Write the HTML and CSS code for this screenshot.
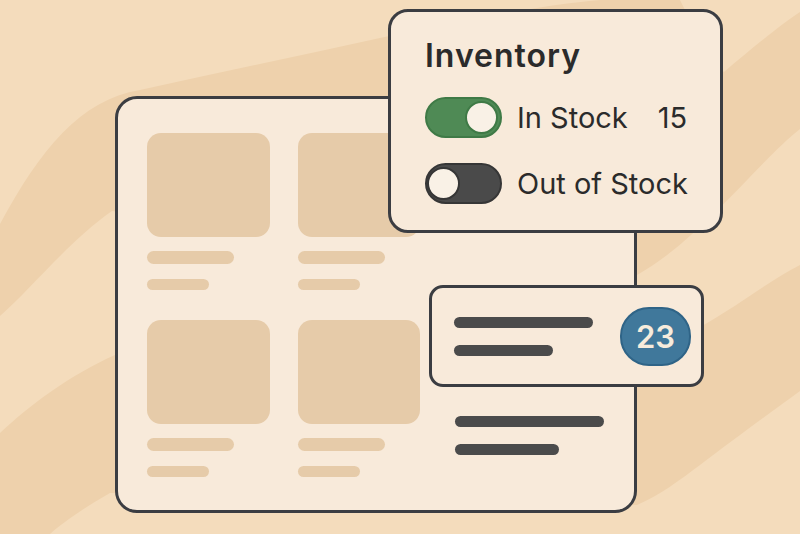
FILE: index.html
```html
<!DOCTYPE html>
<html lang="en">
<head>
    <meta charset="UTF-8">
    <meta name="viewport" content="width=device-width, initial-scale=1.0">
    <title>Inventory</title>
    <link rel="stylesheet" href="styles.css">
</head>
<body>

    <div class="scene">
        <!-- Wavy backdrop -->
        <svg class="backdrop" width="800" height="534" viewBox="0 0 800 534" aria-hidden="true">
            <rect width="800" height="534" fill="#f4dcbc"/>
            <path d="M0 224 C40 150 80 100 140 90 C220 72 300 56 380 38 C470 20 540 5 600 0 L680 0 C700 40 710 60 724 72 C750 50 780 25 800 12 L800 129 C760 160 700 240 637 275 L112 211 C70 240 30 290 0 316 Z" fill="#eed1ac"/>
            <path d="M0 433 C30 405 70 375 115 355 L637 360 C660 345 680 335 700 327 C740 305 770 280 800 265 L800 391 C760 420 733 440 700 465 C680 480 660 495 637 505 L110 493 C80 510 60 525 50 534 L0 534 Z" fill="#eed1ac"/>
        </svg>

        <!-- Product catalog card -->
        <div class="catalog">
            <div class="products">
                <div class="product">
                    <div class="thumb"></div>
                    <div class="line long"></div>
                    <div class="line short"></div>
                </div>
                <div class="product">
                    <div class="thumb"></div>
                    <div class="line long"></div>
                    <div class="line short"></div>
                </div>
                <div class="product">
                    <div class="thumb"></div>
                    <div class="line long"></div>
                    <div class="line short"></div>
                </div>
                <div class="product">
                    <div class="thumb"></div>
                    <div class="line long"></div>
                    <div class="line short"></div>
                </div>
            </div>
            <div class="detail">
                <div class="bar wide"></div>
                <div class="bar narrow"></div>
            </div>
        </div>

        <!-- Inventory filter popup -->
        <div class="inventory">
            <h2>Inventory</h2>
            <div class="filter">
                <span class="toggle on"><span class="knob"></span></span>
                <span class="label">In Stock</span>
                <span class="count">15</span>
            </div>
            <div class="filter">
                <span class="toggle off"><span class="knob"></span></span>
                <span class="label">Out of Stock</span>
            </div>
        </div>

        <!-- Count panel -->
        <div class="count-panel">
            <div class="bars">
                <div class="bar wide"></div>
                <div class="bar narrow"></div>
            </div>
            <div class="badge">23</div>
        </div>
    </div>

</body>
</html>
```

FILE: styles.css
```css
* {
    margin: 0;
    padding: 0;
    box-sizing: border-box;
}

body {
    font-family: Inter, "Open Sans", Arial, sans-serif;
    background-color: #f4dcbc;
    color: #2b2b2b;
}

.scene {
    position: relative;
    width: 800px;
    height: 534px;
    overflow: hidden;
    padding: 96px 0 0 115px;
}

.backdrop {
    position: absolute;
    top: 0;
    left: 0;
}

/* Catalog card */
.catalog {
    position: relative;
    width: 522px;
    height: 417px;
    display: flex;
    padding: 34px 0 0 29px;
    background-color: #f8eada;
    border: 3px solid #3b3d42;
    border-radius: 22px;
}

.products {
    display: grid;
    grid-template-columns: 123px 122px;
    column-gap: 28px;
    row-gap: 30px;
    align-content: start;
}

.product {
    display: flex;
    flex-direction: column;
}

.thumb {
    height: 104px;
    background-color: #e6cba9;
    border-radius: 14px;
}

.line {
    background-color: #e6cba9;
    border-radius: 7px;
}

.line.long {
    width: 87px;
    height: 13px;
    margin-top: 14px;
}

.line.short {
    width: 62px;
    height: 11px;
    margin-top: 15px;
}

.detail {
    margin-left: 35px;
    padding-bottom: 55px;
    display: flex;
    flex-direction: column;
    justify-content: flex-end;
    gap: 17px;
}

.bar {
    height: 11px;
    background-color: #4b4b4b;
    border-radius: 6px;
}

.detail .bar.wide {
    width: 149px;
}

.detail .bar.narrow {
    width: 104px;
}

/* Inventory popup */
.inventory {
    position: absolute;
    left: 388px;
    top: 9px;
    width: 335px;
    height: 224px;
    padding: 24px 30px 0 34px;
    background-color: #f8eada;
    border: 3px solid #3b3d42;
    border-radius: 20px;
}

.inventory h2 {
    font-size: 32px;
    font-weight: 600;
    line-height: 40px;
    margin-bottom: 21px;
    letter-spacing: 1px;
}

.filter {
    display: flex;
    align-items: center;
    height: 41px;
    margin-bottom: 25px;
    font-size: 29px;
}

.toggle {
    position: relative;
    width: 77px;
    height: 41px;
    border-radius: 21px;
    margin-right: 15px;
    flex-shrink: 0;
}

.toggle.on {
    background-color: #4f8a55;
    border: 2px solid #3f7a46;
}

.toggle.off {
    background-color: #4a4a4a;
    border: 2px solid #363636;
}

.knob {
    position: absolute;
    top: 2px;
    width: 33px;
    height: 33px;
    border-radius: 50%;
    background-color: #f9f1e6;
}

.toggle.on .knob {
    right: 2px;
    border: 2px solid #3f7a46;
}

.toggle.off .knob {
    left: 0;
    border: 2px solid #363636;
}

.count {
    margin-left: 30px;
}

/* Count panel */
.count-panel {
    position: absolute;
    left: 429px;
    top: 285px;
    width: 275px;
    height: 102px;
    display: flex;
    align-items: center;
    padding: 0 10px 0 22px;
    background-color: #f8eada;
    border: 3px solid #3b3d42;
    border-radius: 14px;
}

.bars {
    display: flex;
    flex-direction: column;
    gap: 17px;
}

.bars .bar.wide {
    width: 139px;
}

.bars .bar.narrow {
    width: 99px;
}

.badge {
    margin-left: auto;
    width: 71px;
    height: 59px;
    display: flex;
    align-items: center;
    justify-content: center;
    background-color: #40789b;
    border: 2px solid #2f6487;
    border-radius: 29px;
    color: #f7ecdc;
    font-size: 31px;
    font-weight: 600;
}
```
